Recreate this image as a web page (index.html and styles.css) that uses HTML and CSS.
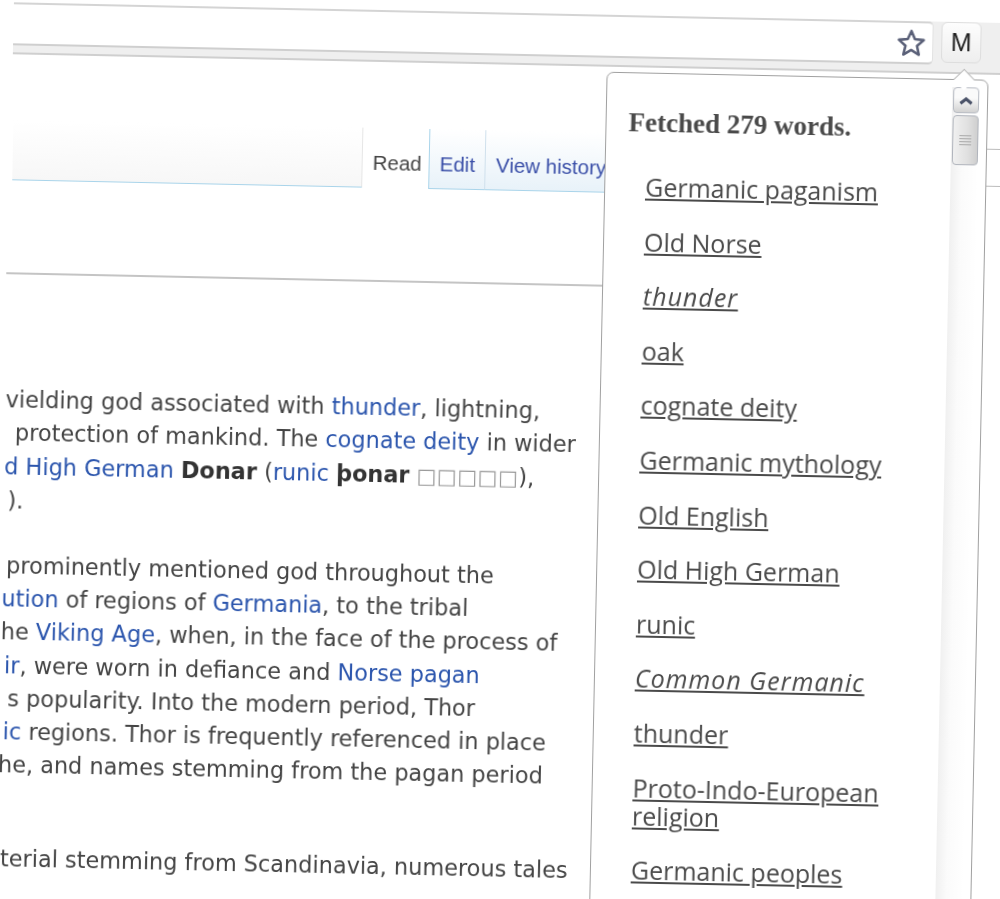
FILE: index.html
```html
<!DOCTYPE html>
<html lang="en">
<head>
  <meta charset="UTF-8" />
  <title>Thor - browser extension popup</title>
  <link rel="stylesheet" href="styles.css">
</head>
<body>
  <div class="page">
    <div class="toolbar">
      <div class="omnibox">
        <svg class="star" viewBox="0 0 26 26" width="30" height="30">
          <path d="M13 2.500l3.100 7.100 7.700.7-5.800 5.100 1.700 7.600-6.700-4-6.700 4 1.700-7.600-5.800-5.100 7.700-.7z" fill="#fff" stroke="#5a6078" stroke-width="2.200" stroke-linejoin="round"/>
        </svg>
      </div>
      <button class="ext-button">M</button>
    </div>

    <div class="tabs">
      <div class="tabs-fill"></div>
      <div class="tab active">Read</div>
      <div class="tab">Edit</div>
      <div class="tab">View history</div>
    </div>
    <div class="rule"></div>

    <div class="article">
      <p>
        <span>vielding god associated with <a>thunder</a>, lightning,</span>
        <span class="indent">protection of mankind. The <a>cognate deity</a> in wider</span>
        <span><a>d High German</a> <b>Donar</b> (<a>runic</a> <b>þonar</b> <i class="tofu">□□□□□</i>),</span>
        <span class="indent-small">).</span>
      </p>
      <p class="middle">
        <span>prominently mentioned god throughout the</span>
        <span class="pull"><a>ution</a> of regions of <a>Germania</a>, to the tribal</span>
        <span class="pull">he <a>Viking Age</a>, when, in the face of the process of</span>
        <span><a>ir</a>, were worn in defiance and <a>Norse pagan</a></span>
        <span class="indent-small">s popularity. Into the modern period, Thor</span>
        <span><a>ic</a> regions. Thor is frequently referenced in place</span>
        <span class="pull">he, and names stemming from the pagan period</span>
      </p>
      <p class="last">
        <span>terial stemming from Scandinavia, numerous tales</span>
      </p>
    </div>

    <div class="search-edge"></div>

    <div class="popup">
      <div class="nub"></div>
      <div class="popup-body">
        <h2>Fetched 279 words.</h2>
        <ul class="words">
          <li><a>Germanic paganism</a></li>
          <li><a>Old Norse</a></li>
          <li><a class="em">thunder</a></li>
          <li><a>oak</a></li>
          <li><a>cognate deity</a></li>
          <li><a>Germanic mythology</a></li>
          <li><a>Old English</a></li>
          <li><a>Old High German</a></li>
          <li><a>runic</a></li>
          <li><a class="em">Common Germanic</a></li>
          <li><a>thunder</a></li>
          <li><a>Proto-Indo-European religion</a></li>
          <li><a>Germanic peoples</a></li>
        </ul>
      </div>
      <div class="scrollbar">
        <div class="scroll-up">
          <svg viewBox="0 0 14 8" width="16" height="9"><path d="M2 6.500l5-4 5 4" fill="none" stroke="#4a5268" stroke-width="2.800"/></svg>
        </div>
        <div class="scroll-thumb"><div class="grip"></div></div>
      </div>
    </div>
  </div>
</body>
</html>
```

FILE: styles.css
```css
html, body {
  margin: 0;
  height: 100%;
  overflow: hidden;
  background: #fff;
}

.page {
  position: relative;
  width: 1100px;
  height: 1000px;
  padding-top: 2px;
  box-sizing: border-box;
  transform: rotate(1.2deg);
  transform-origin: 0 0;
  filter: blur(0.4px);
  font-family: "DejaVu Sans", sans-serif;
  color: #444;
}

.toolbar {
  display: flex;
  align-items: flex-start;
  margin-left: 14px;
  height: 52px;
  width: 1000px;
  gap: 8px;
  background: #efefef;
  border-bottom: 2px solid #cfcfcf;
  box-sizing: border-box;
}

.omnibox {
  width: 920px;
  height: 43px;
  box-sizing: border-box;
  background: #fff;
  border-top: 2px solid #d4d4d4;
  border-right: 1px solid #e2e2e2;
  border-bottom: 2px solid #cfcfcf;
  border-radius: 0 5px 5px 0;
  display: flex;
  justify-content: flex-end;
  align-items: center;
  padding-right: 6px;
}

.ext-button {
  width: 40px;
  height: 41px;
  padding: 0;
  background: linear-gradient(#fdfdfd, #eeeeee);
  border: 1px solid #dddddd;
  border-radius: 6px;
  font-family: "Liberation Sans", sans-serif;
  font-size: 25px;
  color: #222;
}

.tabs {
  display: flex;
  align-items: stretch;
  height: 60px;
  margin-top: 66px;
  margin-left: 16px;
  font-family: "Liberation Sans", sans-serif;
  font-size: 20.500px;
  color: #3a4fa8;
}

.tabs-fill {
  width: 349px;
  background: linear-gradient(#fff, #f7f7f7);
  border-bottom: 1px solid #a9d4ea;
  border-right: 1px solid #e6e6e6;
}

.tab {
  display: flex;
  align-items: center;
  padding: 10px 10px 0 10px;
  background: linear-gradient(#fff, #e8f2f9);
  border-bottom: 1px solid #a9d4ea;
  border-right: 1px solid #cfe0ec;
  white-space: nowrap;
}

.tab.active {
  width: 46px;
  background: #fff;
  border-bottom: none;
  border-right: 1px solid #a9d4ea;
  color: #444;
}

.rule {
  height: 2px;
  margin: 92px 0 0 12px;
  width: 620px;
  background: #c4c4c4;
}

.article {
  margin: 109px 0 0 14px;
  width: 590px;
  font-size: 22.400px;
  line-height: 33.300px;
  white-space: nowrap;
}

.article p {
  margin: 0 0 31.500px;
}

.article p.middle {
  padding-left: 4px;
}

.article p.last {
  margin-top: 60px;
  padding-left: 4px;
}

.article span {
  display: block;
}

.article .indent {
  padding-left: 10px;
}

.article .indent-small {
  padding-left: 4px;
}

.article .pull {
  margin-left: -4px;
}

.article a {
  color: #2b55ad;
}

.article b {
  color: #333;
}

.tofu {
  font-style: normal;
  font-size: 21px;
  color: #999;
  letter-spacing: 0.500px;
}

.search-edge {
  position: absolute;
  left: 980px;
  top: 128px;
  width: 30px;
  height: 38px;
  box-sizing: border-box;
  border: 1px solid #bbb;
}

.popup {
  position: absolute;
  left: 608px;
  top: 59px;
  width: 382px;
  height: 960px;
  box-sizing: border-box;
  background: #fff;
  border: 1px solid #a0a0a0;
  border-radius: 7px;
  display: flex;
}

.nub {
  position: absolute;
  right: 14px;
  top: -10px;
  width: 18px;
  height: 18px;
  background: #fff;
  border-left: 1px solid #a0a0a0;
  border-top: 1px solid #a0a0a0;
  transform: rotate(45deg) scale(0.8);
}

.popup-body {
  flex: 1;
  padding: 35px 0 0 22px;
}

.popup-body h2 {
  margin: 0;
  font-family: "Liberation Serif", serif;
  font-size: 27px;
  line-height: 28px;
  color: #4a4a4a;
}

.words {
  list-style: none;
  margin: 36px 0 0;
  padding: 0 36px 0 18px;
  font-family: "Open Sans", sans-serif;
  font-size: 25px;
  line-height: 28px;
}

.words li {
  margin-bottom: 26.600px;
}

.words a {
  color: #4a4a4a;
  text-decoration: underline;
}

.words a.em {
  font-style: italic;
  letter-spacing: 1px;
}

.scrollbar {
  width: 28px;
  margin: 7px 7px 0 0;
  background: linear-gradient(to right, #f0f0f0, #fbfbfb 40%, #fff);
}

.scroll-up {
  height: 24px;
  margin: 0 1px;
  border: 1px solid #b8bcc4;
  border-radius: 4px;
  background: linear-gradient(#fafafa 40%, #d2d2d2);
  display: flex;
  align-items: center;
  justify-content: center;
}

.scroll-thumb {
  height: 48px;
  margin: 2px 1px 0;
  border: 1px solid #b0b4bc;
  border-radius: 4px;
  background: linear-gradient(to right, #f0f0f0, #e0e0e0 60%, #cfcfcf);
  display: flex;
  align-items: center;
  justify-content: center;
}

.grip {
  width: 12px;
  height: 11px;
  background: repeating-linear-gradient(#a8a8a8 0 1px, transparent 1px 3px);
}
```
